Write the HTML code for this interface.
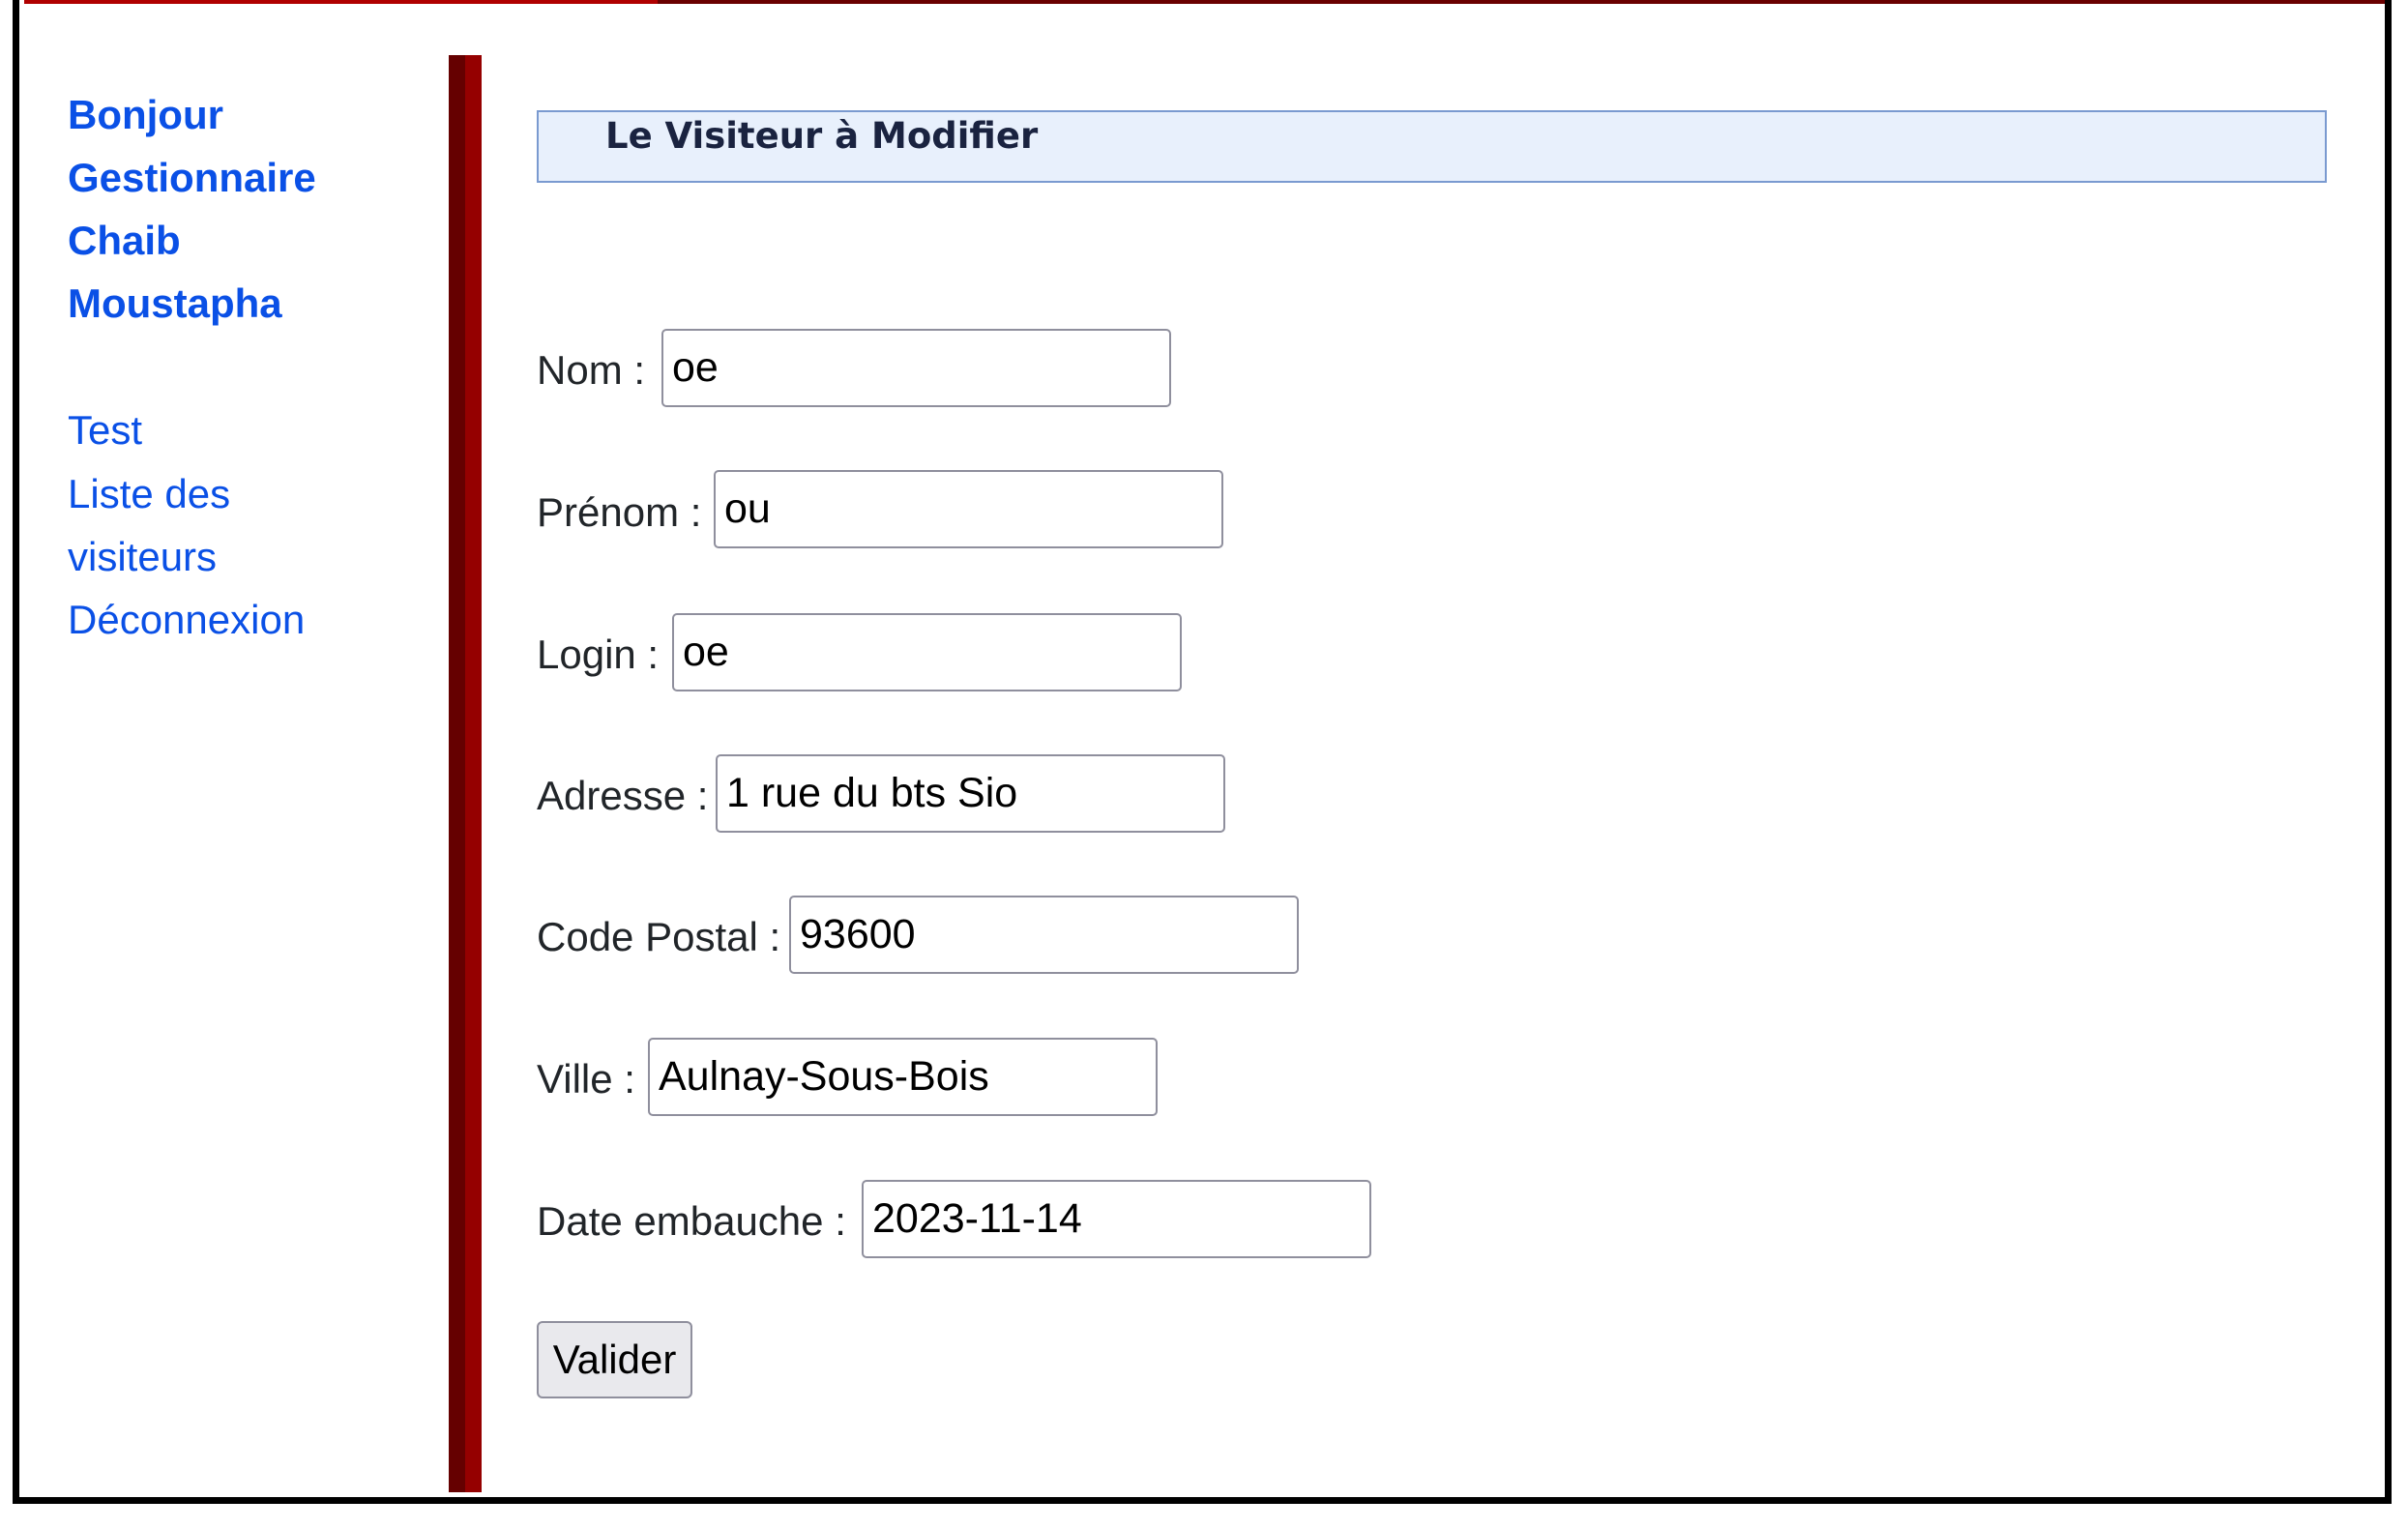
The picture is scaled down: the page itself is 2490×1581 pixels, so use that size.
<!DOCTYPE html>
<html><head><meta charset="utf-8"><style>
body{margin:0;width:2490px;height:1581px;background:#fff;position:relative;overflow:hidden;font-family:"Liberation Sans",sans-serif;}
.a{position:absolute;}
.t{position:absolute;height:60px;line-height:60px;white-space:nowrap;}
.b{font-weight:bold;color:#0a50e6;font-size:42px;}
.l{color:#0a50e6;font-size:42px;}
.lab{color:#212529;font-size:42px;}
.in{position:absolute;height:77px;border:2px solid #8f8f9d;border-radius:5px;box-sizing:content-box;font-size:43px;line-height:77px;padding-left:9px;color:#000;width:514px;}
</style></head><body>
<div class="a" style="left:13px;top:0;width:7px;height:1555px;background:#000"></div>
<div class="a" style="left:2466px;top:0;width:7px;height:1555px;background:#000"></div>
<div class="a" style="left:13px;top:1548px;width:2460px;height:7px;background:#000"></div>
<div class="a" style="left:25px;top:0;width:655px;height:4px;background:#b00000"></div>
<div class="a" style="left:680px;top:0;width:1786px;height:4px;background:#6a0000"></div>
<div class="a" style="left:464px;top:57px;width:17px;height:1486px;background:#650000"></div>
<div class="a" style="left:481px;top:57px;width:17px;height:1486px;background:#950000"></div>

<div class="t b" style="left:70px;top:89px">Bonjour</div>
<div class="t b" style="left:70px;top:154px">Gestionnaire</div>
<div class="t b" style="left:70px;top:219px">Chaib</div>
<div class="t b" style="left:70px;top:284px">Moustapha</div>
<div class="t l" style="left:70px;top:415px">Test</div>
<div class="t l" style="left:70px;top:481px">Liste des</div>
<div class="t l" style="left:70px;top:546px">visiteurs</div>
<div class="t l" style="left:70px;top:611px">Déconnexion</div>

<div class="a" style="left:555px;top:114px;width:1847px;height:71px;border:2px solid #7a9ad0;background:#e8f0fc"></div>
<div class="t" style="left:626px;top:111px;font-family:'DejaVu Sans',sans-serif;font-weight:bold;font-size:37px;color:#1a2340">Le Visiteur à Modifier</div>

<div class="t lab" style="left:555px;top:353px">Nom :</div>
<div class="in" style="left:684px;top:340px">oe</div>
<div class="t lab" style="left:555px;top:500px">Prénom :</div>
<div class="in" style="left:738px;top:486px">ou</div>
<div class="t lab" style="left:555px;top:647px">Login :</div>
<div class="in" style="left:695px;top:634px">oe</div>
<div class="t lab" style="left:555px;top:793px">Adresse :</div>
<div class="in" style="left:740px;top:780px">1 rue du bts Sio</div>
<div class="t lab" style="left:555px;top:939px">Code Postal :</div>
<div class="in" style="left:816px;top:926px">93600</div>
<div class="t lab" style="left:555px;top:1086px">Ville :</div>
<div class="in" style="left:670px;top:1073px">Aulnay-Sous-Bois</div>
<div class="t lab" style="left:555px;top:1233px">Date embauche :</div>
<div class="in" style="left:891px;top:1220px">2023-11-14</div>

<div class="a" style="left:555px;top:1366px;width:157px;height:76px;border:2px solid #8f8f9d;border-radius:6px;background:#e9e9ed;font-size:42px;line-height:76px;text-align:center;color:#000">Valider</div>
</body></html>
